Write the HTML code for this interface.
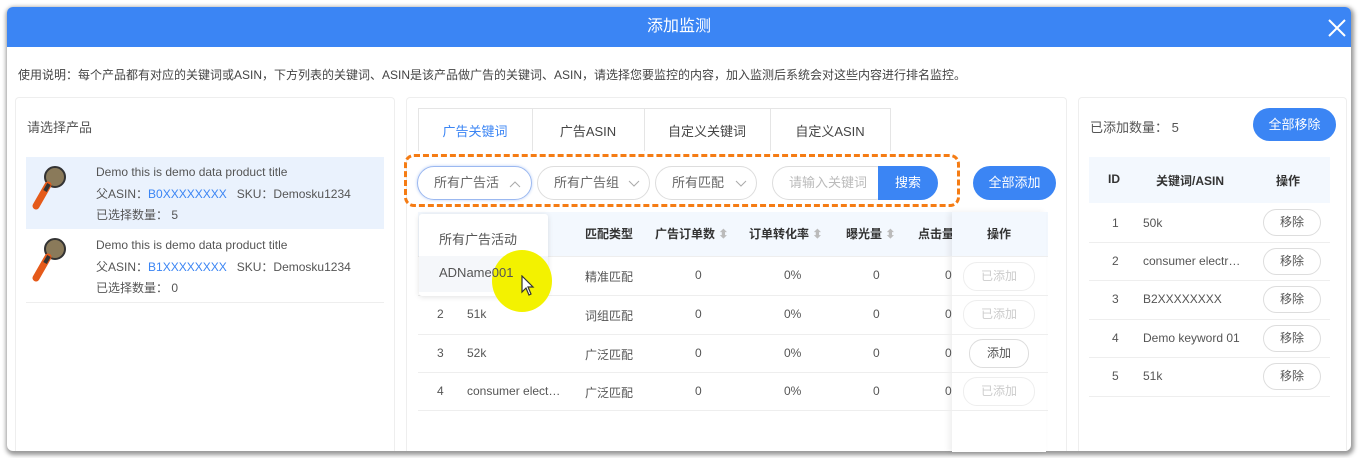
<!DOCTYPE html>
<html><head><meta charset="utf-8"><style>
*{box-sizing:border-box;margin:0;padding:0}
body{width:1359px;height:458px;background:#fff;font-family:"Liberation Sans","Noto Sans CJK SC",sans-serif;color:#555;position:relative;overflow:hidden;font-size:12px}
.a{position:absolute}
.dlg{left:7px;top:7px;width:1344px;height:444px;background:#fff;border-radius:6px;box-shadow:1px 2px 4px 2px #999;overflow:hidden}
.hd{left:0;top:0;width:1344px;height:40px;background:#3b85f4;color:#fff;font-size:16px;text-align:center;line-height:40px}
.panel{border:1px solid #eee;border-bottom:none;border-radius:4px 4px 0 0;background:#fff}
.pill{border:1px solid #ddd;border-radius:17px;height:34px;line-height:32px;font-size:13px;color:#666;padding-left:16px}
.pill svg{position:absolute;top:13px}
.btn{background:#3b85f4;color:#fff;border-radius:17px;text-align:center;font-size:13px}
.sb{border:1px solid #ddd;border-radius:14px;text-align:center;font-size:12px;line-height:27px;width:72px;height:29px}
.row{height:1px;background:#eee}
.c{text-align:center}
.th{font-weight:bold;color:#333;font-size:12px}
</style></head><body>
<div class="a dlg">
<div class="a hd">添加监测</div>
<svg class="a" style="left:1321px;top:12px" width="18" height="18"><path d="M1 1L17 17M17 1L1 17" stroke="#fff" stroke-width="2"/></svg>
</div>
<div class="a" style="left:18px;top:66px;font-size:12px;color:#444">使用说明：每个产品都有对应的关键词或ASIN，下方列表的关键词、ASIN是该产品做广告的关键词、ASIN，请选择您要监控的内容，加入监测后系统会对这些内容进行排名监控。</div>

<div class="a panel" style="left:15px;top:97px;width:380px;height:354px"></div>
<div class="a" style="left:27px;top:117px;font-size:13px;color:#555">请选择产品</div>
<div class="a" style="left:26px;top:157px;width:358px;height:72px;background:#eaf2fd"></div>
<svg class="a" style="left:30px;top:164px" width="36" height="54"><circle cx="25" cy="13" r="10" fill="#8a7a5a" stroke="#333" stroke-width="2"/><path d="M18 21L6 42" stroke="#e55a1a" stroke-width="7" stroke-linecap="round"/><path d="M19 20L15 27" stroke="#333" stroke-width="4"/></svg>
<svg class="a" style="left:30px;top:236px" width="36" height="54"><circle cx="25" cy="13" r="10" fill="#8a7a5a" stroke="#333" stroke-width="2"/><path d="M18 21L6 42" stroke="#e55a1a" stroke-width="7" stroke-linecap="round"/><path d="M19 20L15 27" stroke="#333" stroke-width="4"/></svg>
<div class="a" style="left:96px;top:162px;line-height:21.5px;font-size:12px;color:#555">Demo this is demo data product title<br>父ASIN：<span style="color:#3b85f4">B0XXXXXXXX</span>&nbsp;&nbsp;&nbsp;SKU：Demosku1234<br>已选择数量：&nbsp;5</div>
<div class="a" style="left:96px;top:235px;line-height:21.5px;font-size:12px;color:#555">Demo this is demo data product title<br>父ASIN：<span style="color:#3b85f4">B1XXXXXXXX</span>&nbsp;&nbsp;&nbsp;SKU：Demosku1234<br>已选择数量：&nbsp;0</div>
<div class="a row" style="left:26px;top:302px;width:358px"></div>

<div class="a panel" style="left:406px;top:97px;width:661px;height:354px"></div>
<div class="a" style="left:418px;top:108px;width:473px;height:43px;border:1px solid #e5e5e5;border-bottom:none"></div>
<div class="a" style="left:532px;top:108px;width:1px;height:43px;background:#e5e5e5"></div>
<div class="a" style="left:644px;top:108px;width:1px;height:43px;background:#e5e5e5"></div>
<div class="a" style="left:770px;top:108px;width:1px;height:43px;background:#e5e5e5"></div>
<div class="a c" style="left:418px;top:121px;width:114px;font-size:13px;color:#3b85f4">广告关键词</div>
<div class="a c" style="left:532px;top:121px;width:112px;font-size:13px;color:#444">广告ASIN</div>
<div class="a c" style="left:644px;top:121px;width:126px;font-size:13px;color:#444">自定义关键词</div>
<div class="a c" style="left:770px;top:121px;width:120px;font-size:13px;color:#444">自定义ASIN</div>

<div class="a" style="left:404px;top:154px;width:556px;height:53px;border:3px dashed #f57c14;border-radius:10px"></div>
<div class="a pill" style="left:417px;top:166px;width:115px;border-color:#9bb8f0;box-shadow:0 0 3px #bcd0f5">所有广告活<svg style="left:91px" width="12" height="8"><path d="M1 7L6 2L11 7" stroke="#aaa" fill="none"/></svg></div>
<div class="a pill" style="left:537px;top:166px;width:113px">所有广告组<svg style="left:90px" width="12" height="8"><path d="M1 1L6 6L11 1" stroke="#aaa" fill="none"/></svg></div>
<div class="a pill" style="left:655px;top:166px;width:102px">所有匹配<svg style="left:79px" width="12" height="8"><path d="M1 1L6 6L11 1" stroke="#aaa" fill="none"/></svg></div>
<div class="a pill" style="left:772px;top:166px;width:120px;color:#bbb">请输入关键词</div>
<div class="a" style="left:878px;top:166px;width:60px;height:34px;background:#3b85f4;border-radius:0 17px 17px 0;color:#fff;font-size:13px;line-height:34px;text-align:center">搜索</div>
<div class="a btn" style="left:973px;top:166px;width:83px;height:34px;line-height:34px">全部添加</div>

<div class="a" style="left:418px;top:212px;width:630px;height:44px;background:#f3f8fe"></div>
<div class="a th" style="left:585px;top:225px">匹配类型</div>
<div class="a th" style="left:655px;top:225px">广告订单数 <span style="color:#bbb">⬍</span></div>
<div class="a th" style="left:749px;top:225px">订单转化率 <span style="color:#bbb">⬍</span></div>
<div class="a th" style="left:846px;top:225px">曝光量 <span style="color:#bbb">⬍</span></div>
<div class="a th" style="left:918px;top:225px">点击量</div>
<div class="a" style="left:952px;top:212px;width:94px;height:240px;background:#fff;box-shadow:-3px 0 6px rgba(0,0,0,.07)"></div>
<div class="a" style="left:952px;top:212px;width:94px;height:44px;background:#f3f8fe"></div>
<div class="a th c" style="left:952px;top:225px;width:94px">操作</div>
<div class="a row" style="left:418px;top:256px;width:630px"></div>
<div class="a row" style="left:418px;top:295px;width:630px"></div>
<div class="a row" style="left:418px;top:334px;width:630px"></div>
<div class="a row" style="left:418px;top:372px;width:630px"></div>
<div class="a row" style="left:418px;top:410px;width:630px"></div>

<div class="a" style="left:0;top:268px;width:1359px;font-size:12px;color:#555">
<span class="a" style="left:585px">精准匹配</span><span class="a" style="left:695px">0</span><span class="a" style="left:784px">0%</span><span class="a" style="left:873px">0</span><span class="a" style="left:945px">0</span></div>
<div class="a" style="left:0;top:307px;width:1359px;font-size:12px;color:#555">
<span class="a" style="left:437px">2</span><span class="a" style="left:467px">51k</span><span class="a" style="left:585px">词组匹配</span><span class="a" style="left:695px">0</span><span class="a" style="left:784px">0%</span><span class="a" style="left:873px">0</span><span class="a" style="left:945px">0</span></div>
<div class="a" style="left:0;top:346px;width:1359px;font-size:12px;color:#555">
<span class="a" style="left:437px">3</span><span class="a" style="left:467px">52k</span><span class="a" style="left:585px">广泛匹配</span><span class="a" style="left:695px">0</span><span class="a" style="left:784px">0%</span><span class="a" style="left:873px">0</span><span class="a" style="left:945px">0</span></div>
<div class="a" style="left:0;top:384px;width:1359px;font-size:12px;color:#555">
<span class="a" style="left:437px">4</span><span class="a" style="left:467px">consumer elect…</span><span class="a" style="left:585px">广泛匹配</span><span class="a" style="left:695px">0</span><span class="a" style="left:784px">0%</span><span class="a" style="left:873px">0</span><span class="a" style="left:945px">0</span></div>
<div class="a sb" style="left:963px;top:262px;color:#ccc;border-color:#eee">已添加</div>
<div class="a sb" style="left:963px;top:300px;color:#ccc;border-color:#eee">已添加</div>
<div class="a sb" style="left:969px;top:339px;width:60px;color:#555">添加</div>
<div class="a sb" style="left:963px;top:377px;color:#ccc;border-color:#eee">已添加</div>

<div class="a" style="left:419px;top:214px;width:129px;height:82px;background:#fff;border-radius:3px;box-shadow:0 1px 6px rgba(0,0,0,.12)"></div>
<div class="a" style="left:419px;top:256px;width:129px;height:36px;background:#f5f7fa"></div>
<div class="a" style="left:439px;top:229px;font-size:13px;color:#555">所有广告活动</div>
<div class="a" style="left:492px;top:250px;width:60px;height:62px;border-radius:50%;background:#f3f200"></div>
<div class="a" style="left:439px;top:265px;font-size:13px;color:#555">ADName001</div>
<svg class="a" style="left:520px;top:275px" width="16" height="22"><path d="M2 1L2 17L6 13L9 20L11 19L8 12L13 12Z" fill="#fff" stroke="#333" stroke-width="1.2"/></svg>

<div class="a panel" style="left:1078px;top:97px;width:269px;height:354px"></div>
<div class="a" style="left:1090px;top:117px;font-size:13px;color:#555">已添加数量：&nbsp;5</div>
<div class="a btn" style="left:1253px;top:108px;width:83px;height:33px;line-height:33px">全部移除</div>
<div class="a" style="left:1089px;top:157px;width:241px;height:46px;background:#f3f8fe"></div>
<div class="a th" style="left:1108px;top:172px">ID</div>
<div class="a th" style="left:1156px;top:172px">关键词/ASIN</div>
<div class="a th" style="left:1276px;top:172px">操作</div>
<div class="a row" style="left:1089px;top:242px;width:241px"></div>
<div class="a row" style="left:1089px;top:280px;width:241px"></div>
<div class="a row" style="left:1089px;top:319px;width:241px"></div>
<div class="a row" style="left:1089px;top:357px;width:241px"></div>
<div class="a row" style="left:1089px;top:396px;width:241px"></div>
<div class="a" style="left:1112px;top:216px">1</div><div class="a" style="left:1143px;top:216px">50k</div>
<div class="a" style="left:1112px;top:254px">2</div><div class="a" style="left:1143px;top:254px">consumer electr…</div>
<div class="a" style="left:1112px;top:292px">3</div><div class="a" style="left:1143px;top:292px">B2XXXXXXXX</div>
<div class="a" style="left:1112px;top:331px">4</div><div class="a" style="left:1143px;top:331px">Demo keyword 01</div>
<div class="a" style="left:1112px;top:369px">5</div><div class="a" style="left:1143px;top:369px">51k</div>
<div class="a sb" style="left:1263px;top:209px;width:58px;height:27px;line-height:25px">移除</div>
<div class="a sb" style="left:1263px;top:248px;width:58px;height:27px;line-height:25px">移除</div>
<div class="a sb" style="left:1263px;top:286px;width:58px;height:27px;line-height:25px">移除</div>
<div class="a sb" style="left:1263px;top:325px;width:58px;height:27px;line-height:25px">移除</div>
<div class="a sb" style="left:1263px;top:363px;width:58px;height:27px;line-height:25px">移除</div>
</body></html>
